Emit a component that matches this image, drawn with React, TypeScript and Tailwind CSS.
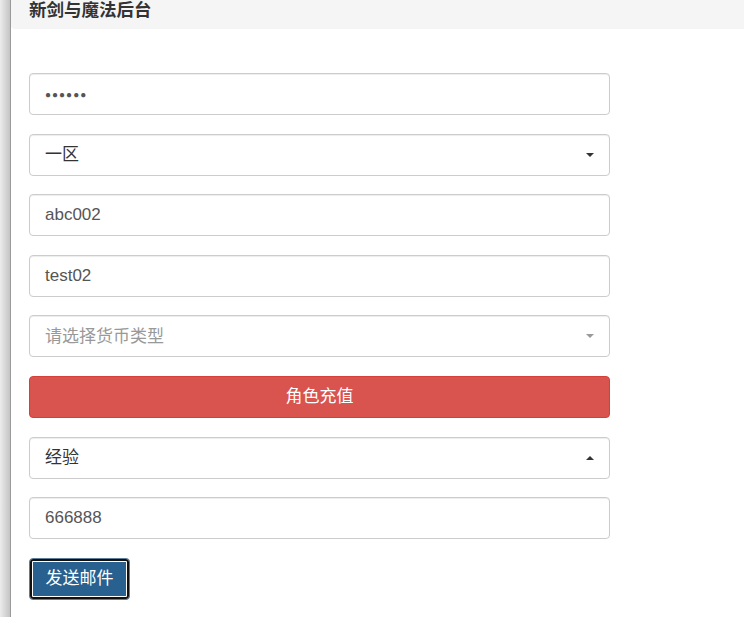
const font = { fontFamily: '"Liberation Sans", Arial, "Noto Sans CJK SC", sans-serif' };

const Caret = ({ up = false, muted = false }: { up?: boolean; muted?: boolean }) => (
  <span
    className={`absolute right-[15px] top-1/2 -translate-y-1/2 h-0 w-0 border-x-[4px] border-x-transparent ${
      up ? "border-b-[4px]" : "border-t-[4px]"
    } ${muted ? "border-b-[#999] border-t-[#999]" : "border-b-[#333] border-t-[#333]"}`}
  />
);

const Field = ({ children }: { children: React.ReactNode }) => (
  <div className="relative flex h-[42px] w-[581px] items-center rounded-[4px] border border-[#ccc] bg-white px-[15px] text-[17px] text-[#555] shadow-[inset_0_1px_1px_rgba(0,0,0,0.075)]">
    {children}
  </div>
);

export default function App() {
  return (
    <div className="flex h-[617px] w-[744px] overflow-hidden bg-white" style={font}>
      <div className="w-[10px] shrink-0 bg-gradient-to-r from-[#ececec] to-[#c4c4c4]" />
      <div className="w-px shrink-0 bg-[#9a9a9a]" />
      <div className="flex-1">
        <div className="flex h-[29px] items-end rounded-bl-[4px] bg-[#f5f5f5] pb-[10px] pl-[18px]">
          <span className="text-[17.5px] font-bold leading-none text-[#333]">新剑与魔法后台</span>
        </div>
        <div className="flex flex-col gap-[18.6px] pl-[18px] pt-[44px]">
          <Field>
            <span className="text-[10px] tracking-[1px] text-[#555]">●●●●●●</span>
          </Field>
          <Field>
            <span className="text-[#333]">一区</span>
            <Caret />
          </Field>
          <Field>abc002</Field>
          <Field>test02</Field>
          <Field>
            <span className="text-[#999]">请选择货币类型</span>
            <Caret muted />
          </Field>
          <button className="h-[42px] w-[581px] rounded-[4px] border border-[#d43f3a] bg-[#d9534f] text-[17px] text-white">
            角色充值
          </button>
          <Field>
            <span className="text-[#333]">经验</span>
            <Caret up />
          </Field>
          <Field>666888</Field>
          <div>
            <button className="h-[42px] w-[101px] rounded-[4px] border border-[#5f7d99] bg-[#286090] text-[17px] text-white shadow-[inset_0_0_0_2px_#111,inset_0_0_0_3px_#fff]">
              发送邮件
            </button>
          </div>
        </div>
      </div>
    </div>
  );
}
